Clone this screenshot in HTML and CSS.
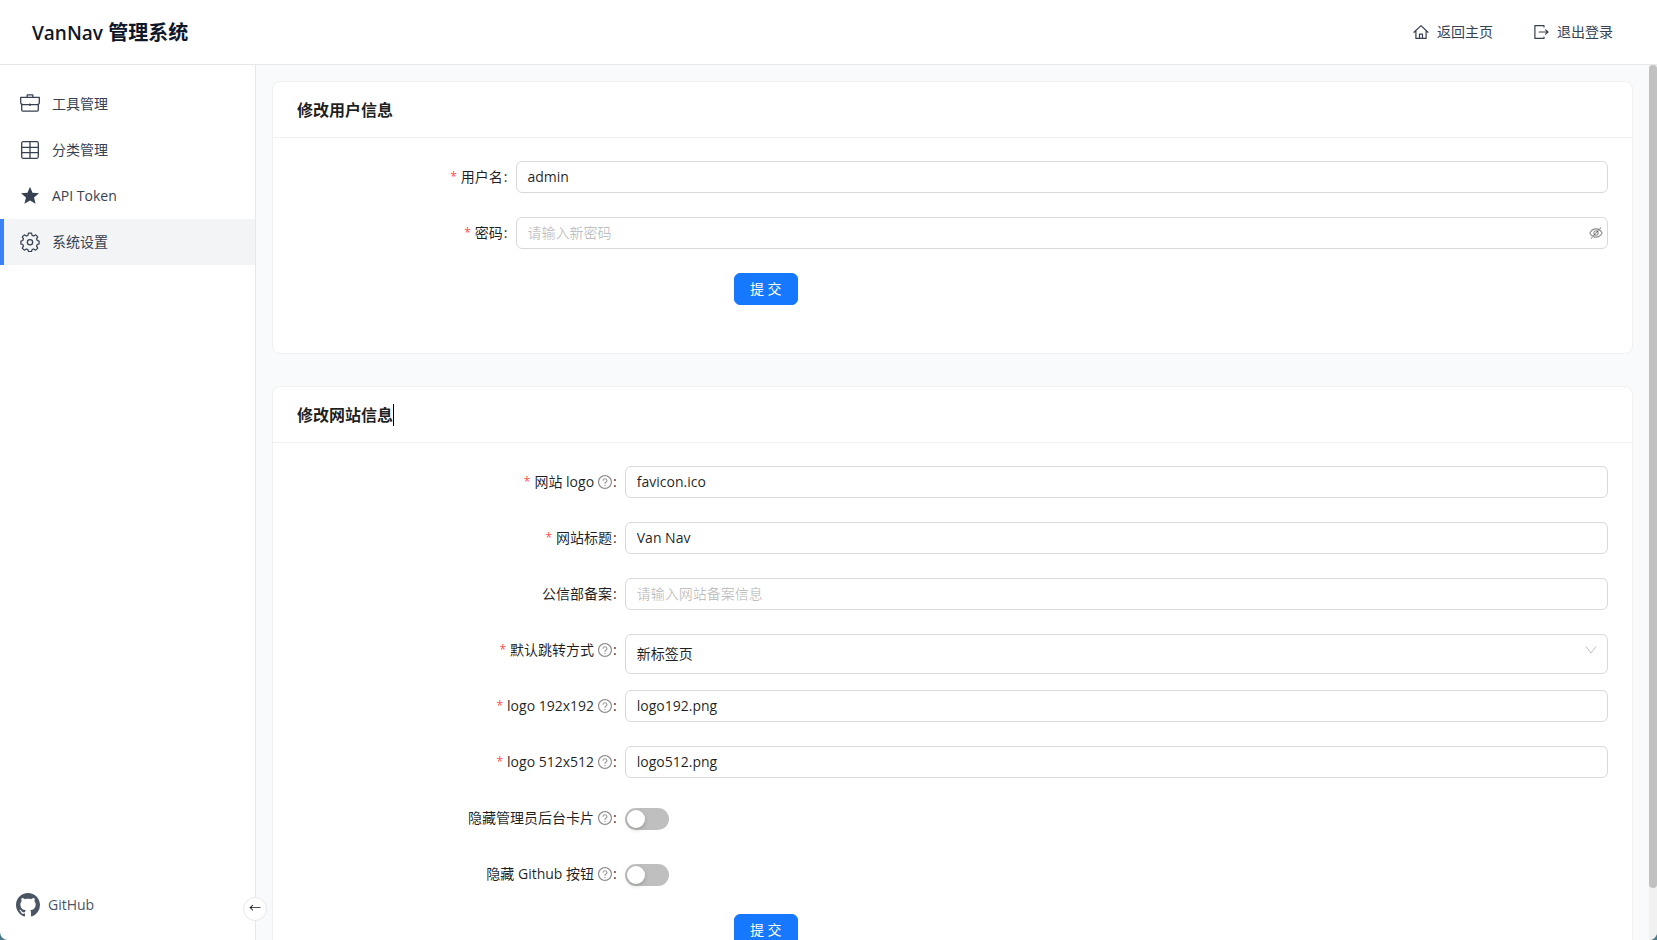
FILE: index.html
```html
<!DOCTYPE html>
<html lang="zh-CN">
<head>
<meta charset="utf-8">
<meta name="viewport" content="width=device-width, initial-scale=1">
<title>VanNav 管理系统</title>
<link rel="stylesheet" href="styles.css">
</head>
<body>
<svg class="sprite" aria-hidden="true">
  <symbol id="help" viewBox="64 64 896 896">
    <path d="M512 64C264.600 64 64 264.600 64 512s200.600 448 448 448 448-200.600 448-448S759.400 64 512 64zm0 820c-205.400 0-372-166.600-372-372s166.600-372 372-372 372 166.600 372 372-166.600 372-372 372z"/>
    <path d="M623.600 316.700C593.600 290.400 554 276 512 276s-81.600 14.500-111.600 40.700C369.200 344 352 380.700 352 420v7.600c0 4.400 3.600 8 8 8h48c4.400 0 8-3.600 8-8V420c0-44.100 43.100-80 96-80s96 35.900 96 80c0 31.100-22 59.600-56.100 72.700-21.200 8.100-39.200 22.300-52.100 40.900-13.100 19-19.900 41.800-19.900 64.900V620c0 4.400 3.600 8 8 8h48c4.400 0 8-3.600 8-8v-22.700a48.300 48.300 0 0130.900-44.800c59-22.700 97.100-74.700 97.100-132.500.100-39.300-17.100-76-48.300-103.300zM472 732a40 40 0 1080 0 40 40 0 10-80 0z"/>
  </symbol>
</svg>
<div class="app">
  <header class="topbar">
    <h1 class="brand"><span class="brand-name">VanNav</span> 管理系统</h1>
    <nav class="topnav">
      <a href="#home">
        <svg class="icon" viewBox="0 0 16 16" fill="none" stroke="currentColor" stroke-width="1.200" stroke-linejoin="round" stroke-linecap="round"><path d="M1 8.300 8 1.600l7 6.700M2.900 7v7.400h10.200V7M6.500 14.200v-4h3v4"/></svg>
        返回主页
      </a>
      <a href="#logout">
        <svg class="icon" viewBox="0 0 16 16" fill="none" stroke="currentColor" stroke-width="1.200" stroke-linejoin="round" stroke-linecap="round"><path d="M11 3V1.600H1.900v12.800H11V13M6.200 8h8.600M12.600 5.900 15 8l-2.400 2.100"/></svg>
        退出登录
      </a>
    </nav>
  </header>
  <div class="layout">
    <aside class="sidebar">
      <nav class="menu">
        <a href="#tools">
          <svg class="menu-icon" viewBox="0 0 20 20" fill="none" stroke="currentColor" stroke-width="1.300" stroke-linejoin="round"><path d="M.7 3.300h18.600v4.900c0 1.600-.8 2.500-2.300 2.500H3C1.500 10.700.7 9.800.7 8.200zM1.700 10.500v5.600c0 .7.400 1.100 1.100 1.100h14.400c.7 0 1.100-.4 1.100-1.100v-5.600M7.200 3.100V.9h5.600v2.200M10 9.600v2.400"/></svg>
          工具管理
        </a>
        <a href="#categories">
          <svg class="menu-icon" viewBox="0 0 20 20" fill="none" stroke="currentColor" stroke-width="1.300"><rect x="1.700" y="1.700" width="16.600" height="16.600" rx="1.500"/><path d="M1.700 7.300h16.600M1.700 12.700h16.600M10 1.700v16.600"/></svg>
          分类管理
        </a>
        <a href="#token">
          <svg class="menu-icon" viewBox="0 0 20 20" fill="currentColor"><path d="m10 .8 2.500 6 6.500.5-5 4.200 1.600 6.300L10 14.400l-5.600 3.400L6 11.500 1 7.300l6.500-.5z"/></svg>
          API Token
        </a>
        <a href="#settings" class="active" aria-current="page">
          <svg class="menu-icon" viewBox="0 0 24 24" fill="none" stroke="currentColor" stroke-width="1.500" stroke-linecap="round" stroke-linejoin="round"><path d="M10.200 1.300h3.600l.7 2.700 1.900.8 2.400-1.400 2.500 2.500-1.400 2.400.8 1.900 2.200.7v3.400l-2.200.7-.8 1.900 1.400 2.400-2.500 2.500-2.400-1.400-1.900.8-.7 2.200h-3.600l-.7-2.200-1.900-.8-2.400 1.400-2.500-2.500 1.400-2.400-.8-1.900-2.200-.7v-3.400l2.200-.7.800-1.900-1.400-2.400 2.500-2.500 2.400 1.400 1.900-.8z"/><circle cx="12" cy="12.300" r="3.200"/></svg>
          系统设置
        </a>
      </nav>
      <a class="github" href="#github">
        <svg viewBox="0 0 16 16" fill="currentColor"><path d="M8 0C3.580 0 0 3.580 0 8c0 3.540 2.290 6.530 5.470 7.590.4.070.55-.17.55-.38 0-.19-.01-.82-.01-1.490-2.010.37-2.530-.49-2.690-.94-.09-.23-.48-.94-.82-1.130-.28-.15-.68-.52-.01-.53.63-.01 1.080.58 1.230.82.72 1.210 1.870.87 2.330.66.070-.52.280-.87.510-1.070-1.780-.2-3.640-.89-3.640-3.950 0-.87.310-1.590.82-2.150-.08-.2-.36-1.020.08-2.120 0 0 .67-.21 2.200.82.640-.18 1.320-.27 2-.27s1.360.09 2 .27c1.530-1.040 2.200-.82 2.200-.82.440 1.100.16 1.920.08 2.120.51.560.82 1.270.82 2.150 0 3.070-1.870 3.750-3.650 3.950.29.25.54.73.54 1.480 0 1.070-.01 1.930-.01 2.200 0 .21.150.46.550.38A8.010 8.010 0 0 0 16 8c0-4.420-3.580-8-8-8z"/></svg>
        GitHub
      </a>
      <button class="collapse" type="button" aria-label="收起侧栏">←</button>
    </aside>
    <main class="content">
      <section class="card">
        <h2 class="card-head">修改用户信息</h2>
        <form class="form form-user">
          <div class="field">
            <label class="required" for="username">用户名</label>
            <input class="text" id="username" type="text" value="admin">
          </div>
          <div class="field">
            <label class="required" for="password">密码</label>
            <div class="control">
              <input class="text" id="password" type="password" placeholder="请输入新密码">
              <button class="reveal" type="button" aria-label="显示密码"><svg viewBox="0 0 16 16" fill="none" stroke="currentColor" stroke-width="1.200" stroke-linecap="round"><path d="M1 8c1.500-3 3.900-4.700 7-4.700S13.500 5 15 8c-1.500 3-3.900 4.700-7 4.700S2.500 11 1 8zM2.500 14 13.500 2"/><circle cx="8" cy="8" r="2.500"/></svg></button>
            </div>
          </div>
          <div class="actions"><button class="submit" type="button">提 交</button></div>
        </form>
      </section>
      <section class="card">
        <h2 class="card-head"><span class="caret">修改网站信息</span></h2>
        <form class="form form-site">
          <div class="field">
            <label class="required" for="logo">网站 logo<svg class="help"><use href="#help"/></svg></label>
            <input class="text" id="logo" type="text" value="favicon.ico">
          </div>
          <div class="field">
            <label class="required" for="title">网站标题</label>
            <input class="text" id="title" type="text" value="Van Nav">
          </div>
          <div class="field">
            <label for="record">公信部备案</label>
            <input class="text" id="record" type="text" placeholder="请输入网站备案信息">
          </div>
          <div class="field field-select">
            <label class="required" for="jump">默认跳转方式<svg class="help"><use href="#help"/></svg></label>
            <div class="control">
              <select class="text" id="jump"><option>新标签页</option></select>
              <svg class="chevron" viewBox="0 0 12 12" fill="none" stroke="currentColor"><path d="M1 2.500 6 9l5-6.500"/></svg>
            </div>
          </div>
          <div class="field">
            <label class="required" for="logo192">logo 192x192<svg class="help"><use href="#help"/></svg></label>
            <input class="text" id="logo192" type="text" value="logo192.png">
          </div>
          <div class="field">
            <label class="required" for="logo512">logo 512x512<svg class="help"><use href="#help"/></svg></label>
            <input class="text" id="logo512" type="text" value="logo512.png">
          </div>
          <div class="field">
            <label for="hide-admin">隐藏管理员后台卡片<svg class="help"><use href="#help"/></svg></label>
            <input class="switch" id="hide-admin" type="checkbox" role="switch">
          </div>
          <div class="field">
            <label for="hide-github">隐藏 Github 按钮<svg class="help"><use href="#help"/></svg></label>
            <input class="switch" id="hide-github" type="checkbox" role="switch">
          </div>
          <div class="actions"><button class="submit" type="button">提 交</button></div>
        </form>
      </section>
    </main>
    <div class="scroll-track" aria-hidden="true"><div class="scroll-thumb"></div></div>
  </div>
</div>
</body>
</html>
```
FILE: styles.css
```css
* {
  box-sizing: border-box;
}

body {
  margin: 0;
  background: #4a7a8c;
  color: rgba(0, 0, 0, 0.88);
  font: 14px/22px "Open Sans", "Noto Sans CJK SC", sans-serif;
}

input,
select,
button {
  font: inherit;
  color: inherit;
  margin: 0;
}

a {
  color: inherit;
  text-decoration: none;
}

.sprite {
  position: absolute;
  width: 0;
  height: 0;
}

.app {
  display: flex;
  flex-direction: column;
  height: 100vh;
  overflow: hidden;
  background: #fff;
  border-radius: 0 0 8px 8px;
}

.topbar {
  display: flex;
  flex: none;
  align-items: center;
  justify-content: space-between;
  height: 65px;
  padding: 0 44px 0 32px;
  border-bottom: 1px solid #e5e7eb;
}

.brand {
  margin: 0;
  padding-top: 2px;
  color: #0f172a;
  font-size: 20px;
  line-height: 28px;
  font-weight: 600;
}

.brand-name {
  font-size: 19px;
}

.topnav {
  display: flex;
  gap: 40px;
  color: #374151;
}

.topnav a {
  display: flex;
  align-items: center;
  gap: 8px;
}

.icon {
  width: 16px;
  height: 16px;
}

.layout {
  display: flex;
  flex: 1;
  min-height: 0;
}

.sidebar {
  position: relative;
  display: flex;
  flex: none;
  flex-direction: column;
  justify-content: space-between;
  width: 256px;
  padding: 16px 0;
  border-right: 1px solid #e5e7eb;
  color: #374151;
}

.menu a {
  display: flex;
  align-items: center;
  gap: 12px;
  height: 46px;
  padding-left: 16px;
  border-left: 4px solid transparent;
}

.menu .active {
  background: #f3f4f6;
  border-left-color: #3b82f6;
}

.menu-icon {
  width: 20px;
  height: 20px;
}

.github {
  display: flex;
  align-items: center;
  gap: 8px;
  padding: 0 16px 7px;
  color: #4b5563;
}

.github svg {
  width: 24px;
  height: 24px;
}

.collapse {
  position: absolute;
  right: -12px;
  bottom: 19px;
  width: 24px;
  height: 24px;
  padding: 0;
  border: 1px solid #e5e7eb;
  border-radius: 50%;
  background: #fff;
  color: #111;
  font-size: 12px;
  line-height: 22px;
}

.content {
  flex: 1;
  min-width: 0;
  overflow-y: auto;
  scrollbar-width: none;
  padding: 16px 16px 0;
  background: #f9fafb;
}

.scroll-track {
  flex: none;
  width: 8px;
  background: #f1f1f1;
}

.scroll-thumb {
  height: 94%;
  border-radius: 4px;
  background: #c1c1c1;
}

.card {
  border: 1px solid #f0f0f0;
  border-radius: 8px;
  background: #fff;
}

.card + .card {
  margin-top: 32px;
}

.card-head {
  margin: 0;
  padding: 16px 24px 15px;
  border-bottom: 1px solid #f0f0f0;
  font-size: 16px;
  line-height: 24px;
  font-weight: 600;
}

.caret {
  border-right: 1px solid #000;
}

.form {
  padding: 23px 24px 24px;
}

.form-user {
  --label: 16.667%;
}

.form-site {
  --label: 25%;
}

.field {
  display: grid;
  grid-template-columns: var(--label) 1fr;
  margin-bottom: 24px;
}

.field-select {
  margin-bottom: 16px;
}

.field label {
  display: flex;
  align-items: center;
  justify-content: flex-end;
  height: 32px;
}

.field label::after {
  content: ":";
  margin: 0 8px 0 1px;
}

.required::before {
  content: "*";
  margin-right: 4px;
  color: #ff4d4f;
  font-size: 12px;
}

.help {
  width: 14px;
  height: 14px;
  margin-left: 4px;
  fill: rgba(0, 0, 0, 0.45);
}

.text {
  width: 100%;
  height: 32px;
  padding: 0 11px 2px;
  border: 1px solid #d9d9d9;
  border-radius: 6px;
  background: #fff;
}

.text::placeholder {
  color: rgba(0, 0, 0, 0.25);
}

.control {
  position: relative;
}

.field-select .text {
  display: block;
  height: 40px;
  padding-bottom: 0;
  appearance: none;
}

.reveal {
  position: absolute;
  top: 9px;
  right: 5px;
  display: flex;
  padding: 0;
  border: 0;
  background: none;
  color: rgba(0, 0, 0, 0.45);
}

.reveal svg {
  width: 14px;
  height: 14px;
}

.chevron {
  position: absolute;
  top: 10px;
  right: 11px;
  width: 12px;
  height: 12px;
  color: rgba(0, 0, 0, 0.25);
}

.switch {
  appearance: none;
  width: 44px;
  height: 22px;
  margin: 6px 0 4px;
  padding: 2px;
  border-radius: 11px;
  background: rgba(0, 0, 0, 0.25);
}

.switch::before {
  content: "";
  display: block;
  width: 18px;
  height: 18px;
  border-radius: 50%;
  background: #fff;
  box-shadow: 0 2px 4px rgba(0, 35, 11, 0.2);
}

.switch:checked {
  background: #1677ff;
}

.switch:checked::before {
  margin-left: auto;
}

.actions {
  margin-left: 33.333%;
  margin-bottom: 24px;
}

.form-site .actions {
  margin-bottom: 0;
}

.submit {
  display: block;
  height: 32px;
  padding: 0 15px;
  border: 1px solid #1677ff;
  border-radius: 6px;
  background: #1677ff;
  color: #fff;
  line-height: 22px;
}
```
